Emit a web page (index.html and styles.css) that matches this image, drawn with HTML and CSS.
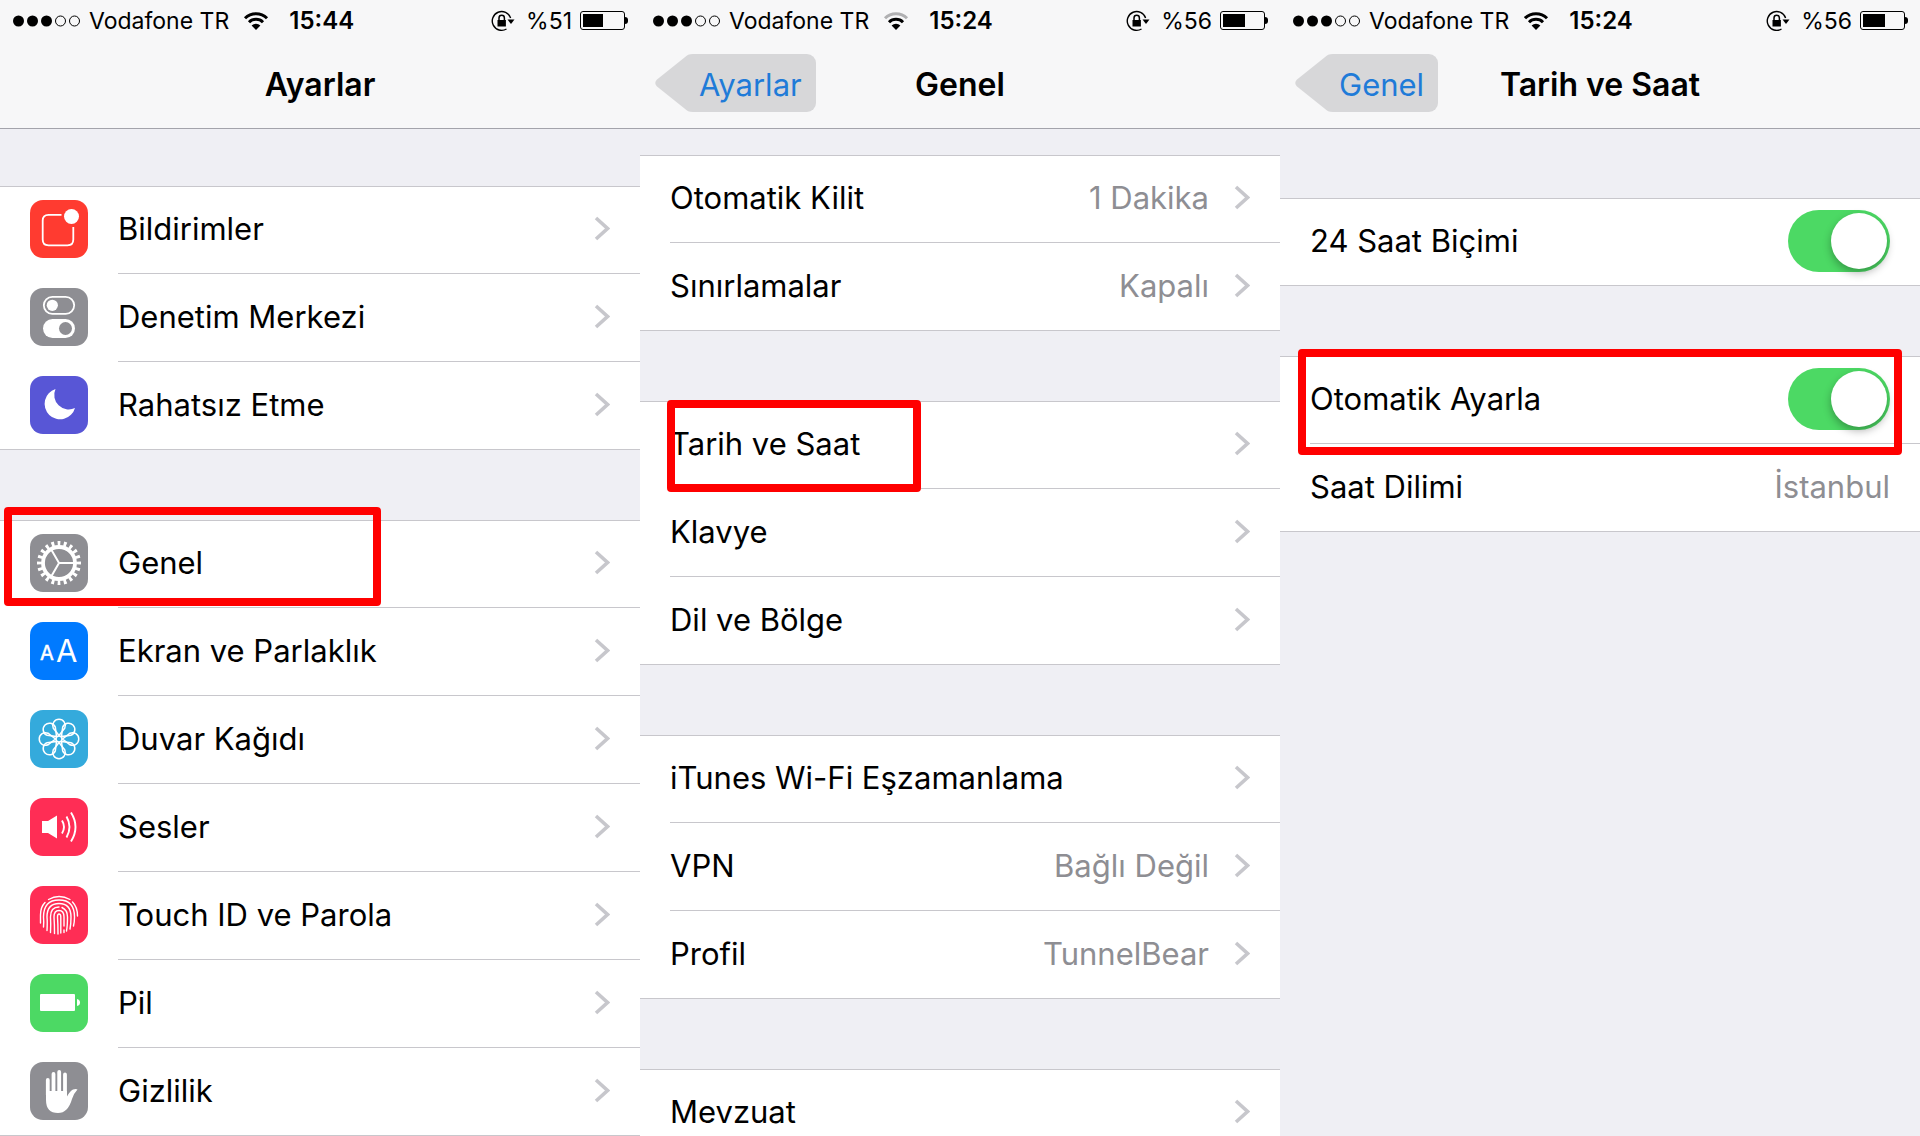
FILE: index.html
```
<!DOCTYPE html>
<html lang="tr">

<head>
    <meta charset="UTF-8">
    <meta name="viewport" content="width=device-width, initial-scale=1.0">
    <title>Ayarlar</title>
    <link rel="stylesheet" href="styles.css">
</head>

<body>
    <!-- shared icons -->
    <svg class="sprite" aria-hidden="true">
        <symbol id="chevron" viewBox="0 0 16 25">
            <path d="M2 2 L13.5 12.5 L2 23" fill="none" stroke="#c7c7cc" stroke-width="3.6" />
        </symbol>
        <symbol id="signal" viewBox="0 0 68 12">
            <circle cx="5.5" cy="6" r="5.5" />
            <circle cx="19.5" cy="6" r="5.5" />
            <circle cx="33.5" cy="6" r="5.5" />
            <circle cx="47.5" cy="6" r="5" fill="none" stroke="#000" />
            <circle cx="61.5" cy="6" r="5" fill="none" stroke="#000" />
        </symbol>
        <symbol id="wifi" viewBox="0 0 26 20">
            <g fill="none" stroke="#000" stroke-width="3">
                <path class="wifi-outer" d="M2 7.2 A15.6 15.6 0 0 1 24 7.2" />
                <path d="M6 11.2 A10 10 0 0 1 20 11.2" />
            </g>
            <path d="M13 19 L8.6 14.6 A6.2 6.2 0 0 1 17.4 14.6 Z" />
        </symbol>
        <symbol id="lock" viewBox="0 0 24 22">
            <path d="M19.6 8 A9.400 9.400 0 1 0 15.500 19" fill="none" stroke="#000" stroke-width="1.4" />
            <path d="M16.500 9.5 H23.500 L20 14 Z" />
            <path d="M6.500 10 h8.4 v6.500 h-8.4 z" />
            <path d="M8 10.5 V8 a2.7 2.7 0 0 1 5.4 0 v2.5" fill="none" stroke="#000" stroke-width="1.5" />
        </symbol>
        <symbol id="arrow" viewBox="0 0 38 58">
            <path d="M38 0 C34 0 32 1 29.500 3.500 L2 25.500 Q-1.500 29 2 32.500 L29.500 54.500 C32 57 34 58 38 58 Z" fill="#d7d7d9" />
        </symbol>
    </svg>

    <div class="screens">
        <section class="screen">
            <header class="header">
                <div class="status">
                    <svg class="signal"><use href="#signal" /></svg>
                    <span class="carrier">Vodafone TR</span>
                    <svg class="wifi"><use href="#wifi" /></svg>
                    <span class="time">15:44</span>
                    <svg class="lock"><use href="#lock" /></svg>
                    <span class="percent">%51</span>
                    <span class="battery"><span class="level" style="width: 51%"></span></span>
                </div>
                <div class="navbar">
                    <h1 class="title">Ayarlar</h1>
                </div>
            </header>
            <main class="content content-main">
                <ul class="list">
                    <li class="row">
                        <svg class="icon red" viewBox="0 0 58 58">
                            <path d="M31.500 14.800 H18.500 Q12.700 14.800 12.700 20.600 V39.500 Q12.700 45.300 18.500 45.300 H37.500 Q43.300 45.300 43.300 39.500 V27" fill="none" stroke="#fff" stroke-width="1.800" />
                            <circle cx="41.500" cy="16.500" r="7.500" fill="#fff" />
                        </svg>
                        <a class="cell" href="#"><span class="label">Bildirimler</span><svg class="chevron"><use href="#chevron" /></svg></a>
                    </li>
                    <li class="row">
                        <svg class="icon gray" viewBox="0 0 58 58">
                            <rect x="13.800" y="8.800" width="30.400" height="17" rx="8.500" fill="none" stroke="#fff" stroke-width="1.800" />
                            <circle cx="22.300" cy="17.300" r="5.600" fill="#fff" />
                            <rect x="13" y="31" width="32" height="19" rx="9.500" fill="#fff" />
                            <circle cx="35.500" cy="40.500" r="6.500" fill="#8e8e93" />
                        </svg>
                        <a class="cell" href="#"><span class="label">Denetim Merkezi</span><svg class="chevron"><use href="#chevron" /></svg></a>
                    </li>
                    <li class="row">
                        <svg class="icon purple" viewBox="0 0 58 58">
                            <path d="M25.500 13 A15.500 15.500 0 1 0 45 32 A14.500 14.500 0 0 1 25.500 13 Z" fill="#fff" />
                        </svg>
                        <a class="cell" href="#"><span class="label">Rahatsız Etme</span><svg class="chevron"><use href="#chevron" /></svg></a>
                    </li>
                </ul>
                <ul class="list">
                    <li class="row">
                        <svg class="icon gray" viewBox="0 0 58 58">
                            <g fill="none" stroke="#fff">
                                <circle cx="29" cy="29" r="19.500" stroke-width="5" pathLength="40" stroke-dasharray="0.900 1.100" stroke-dashoffset="0.450" />
                                <circle cx="29" cy="29" r="16" stroke-width="3.800" />
                                <path d="M29 29 H44 M29 29 L21.500 16 M29 29 L21.500 42" stroke-width="2" />
                            </g>
                        </svg>
                        <a class="cell" href="#"><span class="label">Genel</span><svg class="chevron"><use href="#chevron" /></svg></a>
                        <span class="mark mark-genel"></span>
                    </li>
                    <li class="row">
                        <svg class="icon blue" viewBox="0 0 58 58">
                            <text x="10" y="38" font-size="20" stroke="#fff" stroke-width="0.500">A</text>
                            <text x="26" y="40" font-size="31">A</text>
                        </svg>
                        <a class="cell" href="#"><span class="label">Ekran ve Parlaklık</span><svg class="chevron"><use href="#chevron" /></svg></a>
                    </li>
                    <li class="row">
                        <svg class="icon cyan" viewBox="0 0 58 58">
                            <defs>
                                <path id="petal" d="M29 25.500 L23.200 18 A6.300 6.300 0 1 1 34.800 18 Z" />
                            </defs>
                            <g fill="none" stroke="#fff" stroke-width="1.500">
                                <use href="#petal" />
                                <use href="#petal" transform="rotate(45 29 29)" />
                                <use href="#petal" transform="rotate(90 29 29)" />
                                <use href="#petal" transform="rotate(135 29 29)" />
                                <use href="#petal" transform="rotate(180 29 29)" />
                                <use href="#petal" transform="rotate(225 29 29)" />
                                <use href="#petal" transform="rotate(270 29 29)" />
                                <use href="#petal" transform="rotate(315 29 29)" />
                                <circle cx="29" cy="29" r="3" />
                            </g>
                        </svg>
                        <a class="cell" href="#"><span class="label">Duvar Kağıdı</span><svg class="chevron"><use href="#chevron" /></svg></a>
                    </li>
                    <li class="row">
                        <svg class="icon pink" viewBox="0 0 58 58">
                            <path d="M12 23 H18 L27 17.500 V40.500 L18 35 H12 Z" fill="#fff" />
                            <g fill="none" stroke="#fff" stroke-width="1.900">
                                <path d="M32 22.500 Q36 29 32 35.500" />
                                <path d="M36.500 18.500 Q42.500 29 36.500 39.500" />
                                <path d="M41 14.500 Q50 29 41 43.500" />
                            </g>
                        </svg>
                        <a class="cell" href="#"><span class="label">Sesler</span><svg class="chevron"><use href="#chevron" /></svg></a>
                    </li>
                    <li class="row">
                        <svg class="icon pink" viewBox="0 0 58 58">
                            <g fill="none" stroke="#fff" stroke-width="1.400" stroke-linecap="round">
                                <path d="M18.500 13.500 Q29 7.500 40 13.500" />
                                <path d="M10.500 37 V29 Q10.500 21 15 16.500 M42.500 16 Q47.500 21 47.500 30" />
                                <path d="M13.500 41 Q14 36 13.500 31 Q13.500 14 29 14 Q44.500 14 44.500 31 Q44.500 36 43.500 40" />
                                <path d="M17 44.500 Q17.500 36 17 31 Q17 17.500 29 17.500 Q41 17.500 41 31 Q41 38 40 43" />
                                <path d="M20.500 46.500 Q21 38 20.500 31 Q20.500 21 29 21 M32 21.500 Q37.500 24 37.500 31 Q37.500 40 36.500 45" />
                                <path d="M24.500 47.500 Q24.500 38 24 31 Q24 24.500 29 24.500 Q34 24.500 34 31 V40 M34 44 V46.500" />
                                <path d="M28 48 Q28 38 27.500 31 Q27.500 28 29 28 Q30.800 28 30.800 31 V47" />
                            </g>
                        </svg>
                        <a class="cell" href="#"><span class="label">Touch ID ve Parola</span><svg class="chevron"><use href="#chevron" /></svg></a>
                    </li>
                    <li class="row">
                        <svg class="icon green" viewBox="0 0 58 58">
                            <rect x="10" y="20" width="35" height="17" rx="1" fill="#fff" />
                            <path d="M47 25 Q50 25.500 50 28.500 Q50 31.500 47 32 Z" fill="#fff" />
                        </svg>
                        <a class="cell" href="#"><span class="label">Pil</span><svg class="chevron"><use href="#chevron" /></svg></a>
                    </li>
                    <li class="row">
                        <svg class="icon gray" viewBox="0 0 58 58">
                            <g stroke="#fff" stroke-width="3.800" stroke-linecap="round">
                                <path d="M17.800 18 V33 M23.500 12 V32 M29.200 10 V32 M35 12.500 V32" />
                            </g>
                            <path d="M16 29 H37 V34.500 Q40 29 43 27.500 Q46 26.500 47.500 27.500 Q44 31 42 37 Q38 51 28 51 Q16 51 16 38 Z" fill="#fff" />
                        </svg>
                        <a class="cell" href="#"><span class="label">Gizlilik</span><svg class="chevron"><use href="#chevron" /></svg></a>
                    </li>
                </ul>
            </main>
        </section>

        <section class="screen">
            <header class="header">
                <div class="status">
                    <svg class="signal"><use href="#signal" /></svg>
                    <span class="carrier">Vodafone TR</span>
                    <svg class="wifi weak"><use href="#wifi" /></svg>
                    <span class="time">15:24</span>
                    <svg class="lock"><use href="#lock" /></svg>
                    <span class="percent">%56</span>
                    <span class="battery"><span class="level" style="width: 56%"></span></span>
                </div>
                <div class="navbar">
                    <button class="back"><svg class="arrow"><use href="#arrow" /></svg><span class="back-text">Ayarlar</span></button>
                    <h1 class="title">Genel</h1>
                </div>
            </header>
            <main class="content content-general">
                <ul class="list">
                    <li class="row"><a class="cell" href="#"><span class="label">Otomatik Kilit</span><span class="value">1 Dakika</span><svg class="chevron"><use href="#chevron" /></svg></a></li>
                    <li class="row"><a class="cell" href="#"><span class="label">Sınırlamalar</span><span class="value">Kapalı</span><svg class="chevron"><use href="#chevron" /></svg></a></li>
                </ul>
                <ul class="list">
                    <li class="row">
                        <a class="cell" href="#"><span class="label">Tarih ve Saat</span><svg class="chevron"><use href="#chevron" /></svg></a>
                        <span class="mark mark-tarih"></span>
                    </li>
                    <li class="row"><a class="cell" href="#"><span class="label">Klavye</span><svg class="chevron"><use href="#chevron" /></svg></a></li>
                    <li class="row"><a class="cell" href="#"><span class="label">Dil ve Bölge</span><svg class="chevron"><use href="#chevron" /></svg></a></li>
                </ul>
                <ul class="list">
                    <li class="row"><a class="cell" href="#"><span class="label">iTunes Wi-Fi Eşzamanlama</span><svg class="chevron"><use href="#chevron" /></svg></a></li>
                    <li class="row"><a class="cell" href="#"><span class="label">VPN</span><span class="value">Bağlı Değil</span><svg class="chevron"><use href="#chevron" /></svg></a></li>
                    <li class="row"><a class="cell" href="#"><span class="label">Profil</span><span class="value">TunnelBear</span><svg class="chevron"><use href="#chevron" /></svg></a></li>
                </ul>
                <ul class="list">
                    <li class="row"><a class="cell" href="#"><span class="label">Mevzuat</span><svg class="chevron"><use href="#chevron" /></svg></a></li>
                </ul>
            </main>
        </section>

        <section class="screen">
            <header class="header">
                <div class="status">
                    <svg class="signal"><use href="#signal" /></svg>
                    <span class="carrier">Vodafone TR</span>
                    <svg class="wifi"><use href="#wifi" /></svg>
                    <span class="time">15:24</span>
                    <svg class="lock"><use href="#lock" /></svg>
                    <span class="percent">%56</span>
                    <span class="battery"><span class="level" style="width: 56%"></span></span>
                </div>
                <div class="navbar">
                    <button class="back"><svg class="arrow"><use href="#arrow" /></svg><span class="back-text">Genel</span></button>
                    <h1 class="title">Tarih ve Saat</h1>
                </div>
            </header>
            <main class="content content-date">
                <ul class="list">
                    <li class="row">
                        <div class="cell">
                            <label class="label" for="format24">24 Saat Biçimi</label>
                            <input class="toggle" type="checkbox" id="format24" checked>
                        </div>
                    </li>
                </ul>
                <ul class="list">
                    <li class="row">
                        <div class="cell">
                            <label class="label" for="auto">Otomatik Ayarla</label>
                            <input class="toggle" type="checkbox" id="auto" checked>
                        </div>
                        <span class="mark mark-auto"></span>
                    </li>
                    <li class="row">
                        <div class="cell"><span class="label">Saat Dilimi</span><span class="value">İstanbul</span></div>
                    </li>
                </ul>
            </main>
        </section>
    </div>
</body>

</html>
```
FILE: styles.css
```
* {
    margin: 0;
    padding: 0;
    box-sizing: border-box;
}

body {
    background: #efeff4;
    color: #000;
    font-family: Inter, "Liberation Sans", sans-serif;
    font-size: 31px;
}

.sprite {
    position: absolute;
    width: 0;
    height: 0;
}

.screens {
    display: grid;
    grid-template-columns: repeat(3, 1fr);
    height: 100vh;
    overflow: hidden;
}

.screen {
    min-width: 0;
}

/* Header */
.header {
    background: #f7f7f8;
    border-bottom: 1px solid #a3a3ab;
}

.status {
    display: flex;
    align-items: center;
    height: 40px;
    padding: 1px 12px 0 13px;
    font-size: 23px;
}

.signal {
    width: 68px;
    height: 12px;
}

.carrier {
    margin-left: 8px;
}

.wifi {
    width: 26px;
    height: 20px;
    margin-left: 14px;
}

.weak {
    --outer: #b0b0b2;
}

.wifi-outer {
    stroke: var(--outer, #000);
}

.time {
    margin-left: 20px;
    font-size: 24px;
    font-weight: 600;
}

.lock {
    width: 24px;
    height: 22px;
    margin-left: auto;
}

.percent {
    margin-left: 11px;
}

.battery {
    position: relative;
    width: 45px;
    height: 19px;
    margin-left: 8px;
    margin-right: 3px;
    padding: 2px;
    border: 1px solid #000;
    border-radius: 3px;
}

.battery::after {
    content: "";
    position: absolute;
    top: 5px;
    right: -4px;
    width: 3px;
    height: 7px;
    background: #000;
    border-radius: 0 3px 3px 0;
}

.level {
    display: block;
    height: 100%;
    background: #000;
}

.navbar {
    display: grid;
    grid-template-columns: 1fr auto 1fr;
    align-items: center;
    height: 88px;
    padding: 0 15px;
}

.title {
    grid-column: 2;
    font-size: 32px;
    font-weight: 600;
}

.back {
    display: flex;
    align-items: center;
    justify-self: start;
    height: 58px;
    margin-bottom: 2px;
    background: none;
    border: none;
    color: #1f7bd8;
    font-family: inherit;
    font-size: 31px;
}

.arrow {
    width: 38px;
    height: 58px;
}

.back-text {
    padding: 4px 14px 0 6px;
    line-height: 54px;
    background: #d7d7d9;
    border-radius: 0 9px 9px 0;
}

/* Lists */
.content {
    display: flex;
    flex-direction: column;
    gap: 70px;
}

.content-main {
    padding-top: 57px;
}

.content-general {
    padding-top: 26px;
}

.content-date {
    padding-top: 69px;
}

.list {
    list-style: none;
    background: #fff;
    box-shadow: inset 0 1px #c8c7cc, inset 0 -1px #c8c7cc;
}

.row {
    position: relative;
    display: flex;
    align-items: center;
    gap: 30px;
    height: 88px;
    padding-left: 30px;
}

.icon {
    flex: none;
    width: 58px;
    height: 58px;
    margin-bottom: 2px;
    border-radius: 13px;
    fill: #fff;
}

.red {
    background: #ff3b30;
}

.gray {
    background: #8e8e93;
}

.purple {
    background: #5856d6;
}

.blue {
    background: #007aff;
}

.cyan {
    background: #34aadc;
}

.pink {
    background: #ff2d55;
}

.green {
    background: #4cd964;
}

.cell {
    display: flex;
    flex: 1;
    align-items: center;
    height: 88px;
    padding: 0 30px 2px 0;
    border-bottom: 1px solid #c8c7cc;
    color: inherit;
    text-decoration: none;
}

.row:last-child .cell {
    border-bottom-color: transparent;
}

.label {
    flex: 1;
    white-space: nowrap;
}

.value {
    color: #8e8e93;
}

.chevron {
    width: 16px;
    height: 25px;
    margin-left: 25px;
}

.toggle {
    appearance: none;
    position: relative;
    width: 102px;
    height: 62px;
    background: #e5e5ea;
    border-radius: 31px;
}

.toggle:checked {
    background: #4cd964;
}

.toggle::before {
    content: "";
    position: absolute;
    top: 3px;
    left: 3px;
    width: 56px;
    height: 56px;
    background: #fff;
    border-radius: 50%;
    box-shadow: 0 4px 8px rgba(0, 0, 0, 0.3);
}

.toggle:checked::before {
    left: 43px;
}

/* Red frames around the steps to tap */
.mark {
    position: absolute;
    z-index: 1;
    border: 8px solid #f00;
    border-radius: 4px;
    pointer-events: none;
}

.mark-genel {
    top: -13px;
    left: 4px;
    width: 377px;
    height: 99px;
}

.mark-tarih {
    top: -1px;
    left: 27px;
    width: 254px;
    height: 92px;
}

.mark-auto {
    top: -7px;
    left: 18px;
    right: 18px;
    height: 106px;
}
```
